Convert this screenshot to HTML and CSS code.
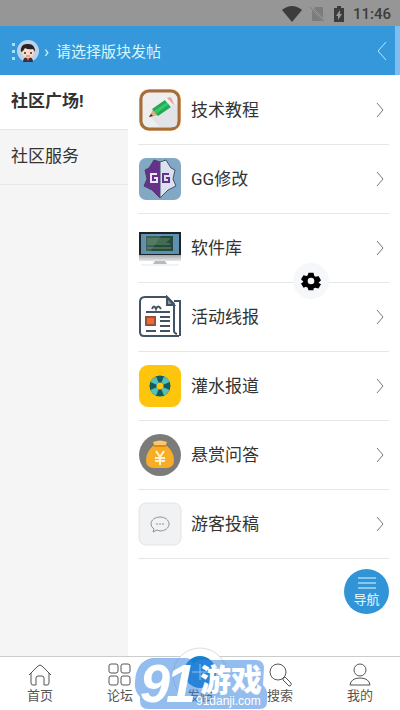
FILE: index.html
```html
<!DOCTYPE html>
<html lang="zh-CN">
<head>
  <meta charset="UTF-8">
  <meta name="viewport" content="width=device-width, initial-scale=1.0">
  <title>请选择版块发帖</title>
  <link rel="stylesheet" href="styles.css">
</head>
<body>
  <div class="status-bar">
    <svg class="wifi" viewBox="0 0 20 16"><path d="M0 4Q10-4 20 4L10 16z"/></svg>
    <svg class="sim" viewBox="0 0 14 16"><path d="M5 1h8v11L4 3z"/><path d="M2 4l11 11H2z"/><path class="slash" d="M0 1l14 14"/></svg>
    <svg class="battery" viewBox="0 0 10 16"><path fill-rule="evenodd" d="M3 0h4v2h3v14H0V2h3zM6 4L2 10h2v4l4-6H6z"/></svg>
    <time>11:46</time>
  </div>

  <header class="header">
    <svg class="dots" viewBox="0 0 4 18"><path d="M0 1h3v3H0zM0 8h3v3H0zM0 15h3v3H0z"/></svg>
    <svg class="avatar" viewBox="0 0 22 22">
      <circle cx="11" cy="11" r="11" fill="#b9d3ea"/>
      <path d="M6 22q0-5 5-5t5 5z" fill="#34323c"/>
      <path d="M9 17h4l-2 4z" fill="#e8694f"/>
      <ellipse cx="11" cy="12" rx="6" ry="6" fill="#fbdcc5"/>
      <path d="M4 12Q3 4 10 4q8-1 8 8l-2-3q-5 1-8-1l-2 3z" fill="#2b2023"/>
      <circle cx="8" cy="13" r="1" fill="#33272a"/><circle cx="14" cy="13" r="1" fill="#33272a"/>
      <path d="M9 16h4" stroke="#d86957"/>
    </svg>
    <span class="crumb">›</span>
    <h1>请选择版块发帖</h1>
    <a class="back" href="#" aria-label="返回"><svg viewBox="0 0 10 20"><path d="M9 1L1 10l8 9"/></svg></a>
  </header>

  <div class="content">
    <nav class="sidebar">
      <a class="active" href="#">社区广场!</a>
      <a href="#">社区服务</a>
    </nav>
    <main class="boards">
      <a class="board" href="#">
        <svg class="icon" viewBox="0 0 44 44">
          <rect x="1" y="1" width="42" height="42" rx="10" fill="#f7c78c"/>
          <rect x="3" y="3" width="38" height="38" rx="8" fill="#eeeeef" stroke="#a66d3a" stroke-width="3"/>
          <path d="M12 29L34 12l5 6v17q0 4-4 4H22z" fill="#e2e3e6"/>
          <path d="M11 29l4-8 6 6z" fill="#dfb184"/><path d="M11 29l2-3 2 2z" fill="#303030"/>
          <path d="M14 21L27 12l6 7-13 9z" fill="#20aa54"/>
          <path d="M16 23l13-9 2 2-13 10z" fill="#38c66d"/>
          <path d="M27 12l3-2 5 7-2 2z" fill="#eeeeea"/>
          <path d="M29 10q4-2 5 1t2 6z" fill="#e7a3a2"/>
        </svg>
        <span>技术教程</span><svg class="arrow" viewBox="0 0 8 14"><path d="M1 0l6 7-6 7"/></svg>
      </a>
      <a class="board" href="#">
        <svg class="icon" viewBox="0 0 44 44">
          <rect x="1" y="1" width="42" height="42" rx="7" fill="#82a8c5"/>
          <path d="M22 5L16 3l-5 8-4 2 2 9-3 7 8 4 8 8z" fill="#65318b" stroke="#514062"/>
          <path d="M22 5l6-2 5 8 4 2-2 9 3 7-8 4-8 8z" fill="#dde1ef" stroke="#405366"/>
          <path d="M19 17h-6v8h6v-4h-3" fill="none" stroke="#eee6f4" stroke-width="2"/>
          <path d="M31 17h-6v8h6v-4h-3" fill="none" stroke="#65318b" stroke-width="2"/>
        </svg>
        <span>GG修改</span><svg class="arrow" viewBox="0 0 8 14"><path d="M1 0l6 7-6 7"/></svg>
      </a>
      <a class="board" href="#">
        <svg class="icon" viewBox="0 0 44 44">
          <defs><linearGradient id="metal" x2="0" y2="1"><stop stop-color="#a3a6a8"/><stop offset="1" stop-color="#e8e9eb"/></linearGradient></defs>
          <path d="M1 6h42v24H1z" fill="#1d2428"/>
          <path d="M3 8h38v20H3z" fill="#5e91af"/>
          <path d="M8 10h27v15H8z" fill="#25483f"/>
          <path d="M9 12h24l-5 5h4v2H9zM9 21h24v2H9z" fill="#456c50"/>
          <path d="M7 9h17L12 26H7z" fill="#87a5a0" opacity=".25"/>
          <path d="M1 29h42v6H1z" fill="url(#metal)"/>
          <path d="M17 35h10l2 3H15z" fill="#b8bbbd"/><path d="M3 39h38" stroke="#e5e7e9"/>
        </svg>
        <span>软件库</span><svg class="arrow" viewBox="0 0 8 14"><path d="M1 0l6 7-6 7"/></svg>
      </a>
      <a class="board" href="#">
        <svg class="icon news" viewBox="0 0 44 44">
          <path d="M29 2H7Q2 2 2 7v30q0 4 4 4h35M29 2l7 7v27q0 2 3 3M36 6h6v35"/>
          <path d="M29 2v8h7z" fill="#879d96"/>
          <path d="M14 14q2-5 4 0 2-5 5 0M8 17h24M22 22h10M22 26h10M22 31h10M8 36h10M22 36h10"/>
          <path class="photo" d="M8 22h9v8H8z"/>
        </svg>
        <span>活动线报</span><svg class="arrow" viewBox="0 0 8 14"><path d="M1 0l6 7-6 7"/></svg>
      </a>
      <a class="board" href="#">
        <svg class="icon" viewBox="0 0 44 44">
          <rect x="1" y="1" width="42" height="42" rx="9" fill="#ffc40c"/>
          <circle cx="22" cy="22" r="7" fill="none" stroke="#155b62" stroke-width="7"/>
          <circle cx="22" cy="22" r="7" fill="none" stroke="#56bfb6" stroke-width="7" pathLength="16" stroke-dasharray="2 2" stroke-dashoffset="3"/>
        </svg>
        <span>灌水报道</span><svg class="arrow" viewBox="0 0 8 14"><path d="M1 0l6 7-6 7"/></svg>
      </a>
      <a class="board" href="#">
        <svg class="icon" viewBox="0 0 44 44">
          <circle cx="22" cy="22" r="21" fill="#7b7b7a"/>
          <path d="M16 12h12q8 7 8 15 0 8-8 8H16q-8 0-8-8 0-8 8-15z" fill="#f8ad29"/>
          <path d="M15 9q7-3 14 0l-2 5H17z" fill="#ffc765"/><path d="M16 13h12" stroke="#d68d20" stroke-width="2"/>
          <path d="M18 18l4 6 4-6M22 24v8M17 25h10M17 28h10" fill="none" stroke="#fff3ce" stroke-width="2"/>
        </svg>
        <span>悬赏问答</span><svg class="arrow" viewBox="0 0 8 14"><path d="M1 0l6 7-6 7"/></svg>
      </a>
      <a class="board" href="#">
        <svg class="icon" viewBox="0 0 44 44">
          <rect x="1" y="1" width="42" height="42" rx="7" fill="#f1f2f3" stroke="#e2e4e5"/>
          <path d="M16 27q-3-2-3-5c0-4 4-7 9-7s9 3 9 7-4 7-9 7l-3-1-4 2z" fill="none" stroke="#87949c"/>
          <path d="M19 21v2M22 21v2M25 21v2" stroke="#87949c"/>
        </svg>
        <span>游客投稿</span><svg class="arrow" viewBox="0 0 8 14"><path d="M1 0l6 7-6 7"/></svg>
      </a>
    </main>
  </div>

  <footer class="tabbar">
    <a href="#"><svg viewBox="0 0 24 24"><path d="M1 12L10 3q2-2 4 0l9 9M3 10v10q0 2 2 2h3v-7q0-2 2-2h4q2 0 2 2v7h3q2 0 2-2V10"/></svg>首页</a>
    <a href="#"><svg viewBox="0 0 24 24"><rect x="1" y="1" width="9" height="9" rx="2"/><rect x="13" y="1" width="9" height="9" rx="2"/><rect x="1" y="13" width="9" height="9" rx="2"/><rect x="13" y="13" width="9" height="9" rx="2"/></svg>论坛</a>
    <a class="post" href="#"><svg viewBox="0 0 56 56"><circle class="ring" cx="28" cy="28" r="27"/><circle class="disc" cx="28" cy="25" r="16"/><path class="plus" d="M20 25h16M28 17v16"/></svg>发帖</a>
    <a href="#"><svg viewBox="0 0 24 24"><circle cx="10" cy="9" r="8"/><path d="M15 15l2-1 6 6q1 2-1 3h-1l-6-6z"/></svg>搜索</a>
    <a href="#"><svg viewBox="0 0 24 24"><circle cx="12" cy="7" r="6"/><path d="M2 22q1-7 10-7t10 7z"/></svg>我的</a>
    <svg class="watermark" viewBox="0 0 136 54">
      <path class="blob" d="M20 2h34q6 0 7 7 3-5 9-5h54q7 0 8 7l-1 18q5 5 4 12v5q0 7-7 7H16q-8 0-8-8v-4q-6-6-5-15Q4 5 20 2z"/>
      <text class="digits" x="8" y="46">9</text>
      <text class="digits" x="34" y="46">1</text>
      <text class="game" x="68" y="35">游戏</text>
      <text class="site" x="64" y="49">91danji.com</text>
    </svg>
  </footer>

  <button class="settings" type="button" aria-label="设置">
    <svg viewBox="0 0 24 24"><path fill-rule="evenodd" d="M9 2h6l1 4 2 1 3-1 3 5-3 3 3 2-3 5-4-1-2 1v2H9l-1-3-2-1-3 1-3-5 3-2-3-3 3-5 4 1 1-1zM12 8a4 4 0 100 8 4 4 0 000-8z"/></svg>
  </button>
  <button class="guide" type="button"><svg viewBox="0 0 18 12"><path d="M0 1h18M0 6h18M0 11h18"/></svg>导航</button>
</body>
</html>
```
FILE: styles.css
```css
* {
  box-sizing: border-box;
}
body {
  display: flex;
  flex-direction: column;
  min-height: 100vh;
  margin: 0;
  background: #fff;
  color: #333;
  font-family: Roboto, "Noto Sans CJK SC", sans-serif;
  font-size: 17px;
}
a {
  color: inherit;
  text-decoration: none;
}
svg {
  flex: none;
}
button {
  padding: 0;
  border: 0;
  font-family: inherit;
}

/* status bar */
.status-bar {
  display: flex;
  align-items: center;
  justify-content: flex-end;
  height: 26px;
  padding: 2px 9px 0 0;
  background: #969696;
  color: #3c3c3c;
  fill: #3c3c3c;
  font-size: 15px;
  font-weight: 500;
}
.wifi {
  width: 20px;
  height: 16px;
  margin-right: 8px;
}
.sim {
  width: 14px;
  height: 16px;
  margin-right: 10px;
  fill: #7c7c7c;
}
.slash {
  stroke: #7c7c7c;
}
.battery {
  width: 10px;
  height: 16px;
  margin-right: 9px;
}

/* header */
.header {
  display: flex;
  align-items: center;
  height: 49px;
  padding: 0 8px 0 12px;
  border-right: 5px solid #7dbdf0;
  background: #3498db;
  color: #d5f7ff;
}
.dots {
  width: 4px;
  height: 18px;
  fill: #a4e2fa;
}
.avatar {
  width: 22px;
  height: 22px;
  margin-left: 1px;
}
.crumb {
  margin: 0 7px 0 5px;
}
.header h1 {
  margin: 0;
  font-size: 15px;
  font-weight: 400;
}
.back {
  margin-left: auto;
}
.back svg {
  display: block;
  width: 10px;
  height: 20px;
  fill: none;
  stroke: #b5edff;
}

/* sections and boards */
.content {
  display: flex;
  flex: 1;
}
.sidebar {
  width: 32%;
  background: #f5f5f5;
}
.sidebar a {
  display: block;
  height: 55px;
  padding-left: 11px;
  border-bottom: 1px solid #e6e6e6;
  line-height: 53px;
}
.sidebar .active {
  background: #fff;
  font-weight: 700;
}
.boards {
  flex: 1;
  padding: 1px 11px 0 10px;
}
.board {
  display: flex;
  align-items: center;
  height: 69px;
  padding-right: 5px;
  border-bottom: 1px solid #e6e6e6;
}
.board span {
  padding-bottom: 4px;
}
.icon {
  width: 44px;
  height: 44px;
  margin-right: 9px;
}
.arrow {
  width: 8px;
  height: 14px;
  margin-left: auto;
  fill: none;
  stroke: #777;
}
.news {
  fill: none;
  stroke: #425366;
  stroke-width: 2;
}
.news .photo {
  fill: #ed6b32;
  stroke: #96503c;
}

/* bottom tabs */
.tabbar {
  position: relative;
  display: grid;
  grid-template-columns: repeat(5, 1fr);
  height: 54px;
  border-top: 1px solid #ccc;
  background: #fff;
}
.tabbar a {
  display: flex;
  flex-direction: column;
  align-items: center;
  padding-top: 6px;
  color: #555;
  font-size: 13px;
  line-height: 18px;
}
.tabbar a svg {
  width: 24px;
  height: 24px;
  fill: none;
  stroke: #555;
}
.tabbar .post svg {
  width: 56px;
  height: 56px;
  margin: -16px 0;
}
.post .ring {
  fill: #fff;
  stroke: #ddd;
}
.post .disc {
  fill: #1580d0;
  stroke: none;
}
.post .plus {
  stroke: #fff;
}
.watermark {
  position: absolute;
  top: -1px;
  left: 50%;
  width: 136px;
  height: 54px;
  margin-left: -68px;
  overflow: visible;
  fill: #fff;
  pointer-events: none;
}
.blob {
  fill: #3a86e0;
  opacity: .55;
}
.digits {
  font: italic 700 54px "Liberation Sans", sans-serif;
}
.game {
  font: 900 31px "Noto Sans CJK SC", sans-serif;
}
.site {
  font: 400 12px "Liberation Sans", sans-serif;
}

/* floating buttons */
.settings,
.guide {
  position: fixed;
  border-radius: 50%;
}
.settings {
  top: 263px;
  right: 71px;
  width: 36px;
  height: 36px;
  background: #f5f7fb;
}
.settings svg {
  display: block;
  width: 20px;
  height: 20px;
  margin: auto;
}
.guide {
  right: 11px;
  bottom: 96px;
  width: 45px;
  height: 45px;
  background: #3094d7;
  color: #e3faff;
  font-size: 13px;
  line-height: 18px;
}
.guide svg {
  display: block;
  width: 18px;
  height: 12px;
  margin: 2px auto;
  stroke: #e3faff;
}
```
